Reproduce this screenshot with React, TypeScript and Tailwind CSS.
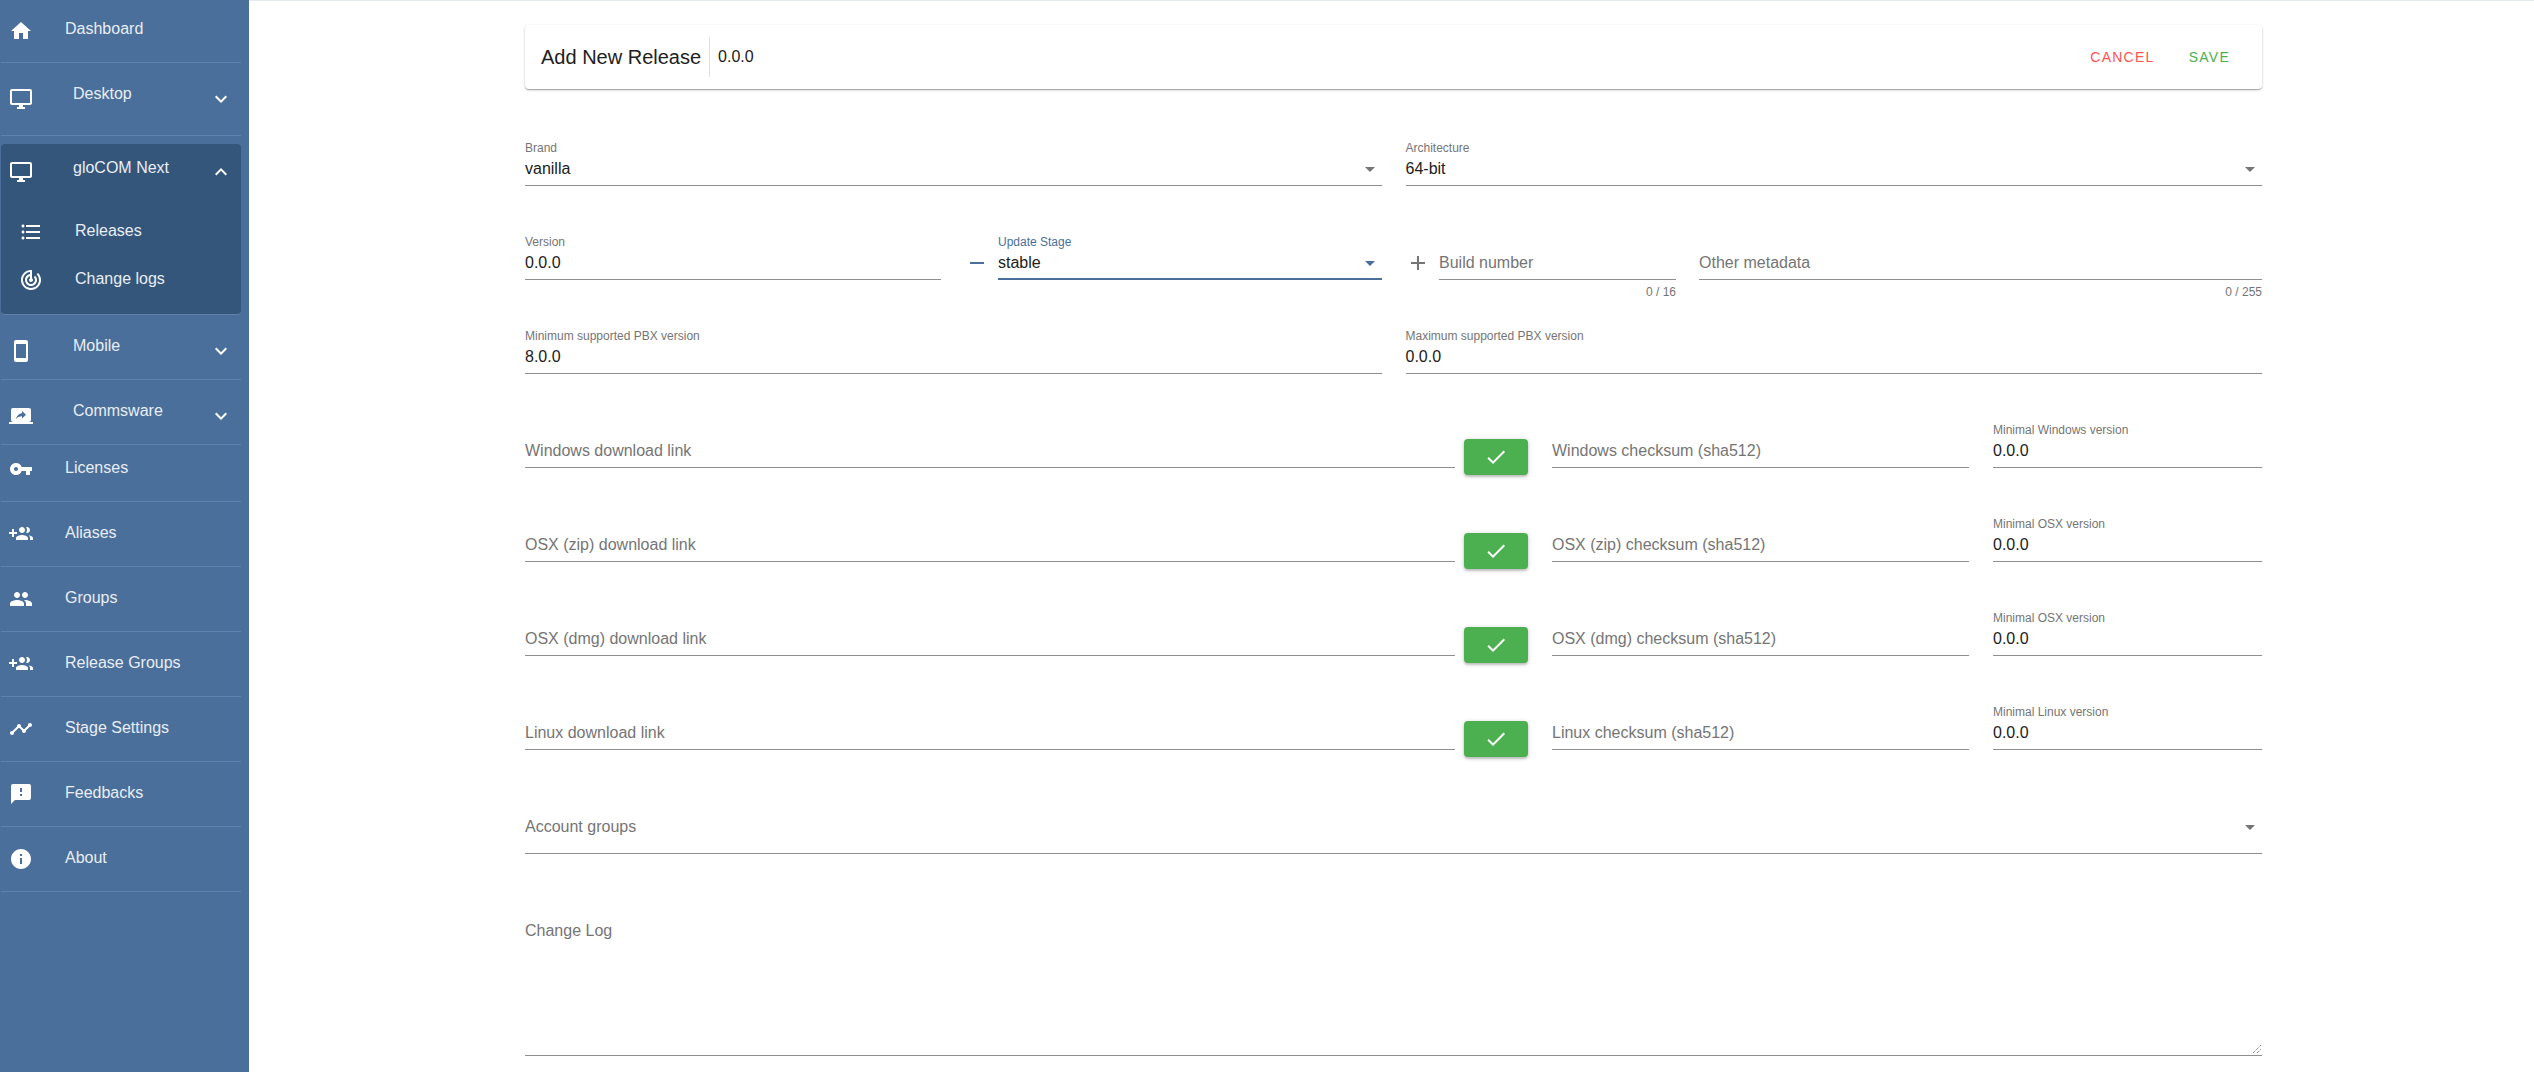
import type { ReactNode } from "react";
import {
  MdAdd,
  MdArrowDropDown,
  MdCheck,
  MdExpandLess,
  MdExpandMore,
  MdFeedback,
  MdFormatListBulleted,
  MdHome,
  MdInfo,
  MdOutlineDesktopWindows,
  MdRemove,
  MdScreenShare,
  MdStayCurrentPortrait,
  MdTimeline,
  MdTrackChanges,
  MdVpnKey,
} from "react-icons/md";
import type { IconType } from "react-icons";

// the older material glyphs, react-icons ships a redrawn version of these
const GroupAddIcon: IconType = ({ className }) => (
  <svg className={className} viewBox="0 0 24 24" fill="currentColor">
    <path d="M8 10H5V7H3v3H0v2h3v3h2v-3h3v-2zm10 1c1.66 0 2.99-1.34 2.99-3S19.66 5 18 5c-.32 0-.63.05-.91.14.57.81.9 1.79.9 2.86s-.34 2.04-.9 2.86c.28.09.59.14.91.14zm-5 0c1.66 0 2.99-1.34 2.99-3S14.66 5 13 5s-3 1.34-3 3 1.34 3 3 3zm6.62 2.16c.83.73 1.38 1.66 1.38 2.84v2h3v-2c0-1.54-2.37-2.49-4.38-2.84zM13 13c-2 0-6 1-6 3v2h12v-2c0-2-4-3-6-3z" />
  </svg>
);

const GroupIcon: IconType = ({ className }) => (
  <svg className={className} viewBox="0 0 24 24" fill="currentColor">
    <path d="M16 11c1.66 0 2.99-1.34 2.99-3S17.66 5 16 5c-1.66 0-3 1.34-3 3s1.34 3 3 3zm-8 0c1.66 0 2.99-1.34 2.99-3S9.66 5 8 5C6.34 5 5 6.34 5 8s1.34 3 3 3zm0 2c-2.33 0-7 1.17-7 3.5V19h14v-2.5c0-2.33-4.67-3.5-7-3.5zm8 0c-.29 0-.62.02-.97.05 1.16.84 1.97 1.97 1.97 3.45V19h6v-2.5c0-2.33-4.67-3.5-7-3.5z" />
  </svg>
);

type NavItem = {
  label: string;
  icon: IconType;
  height: string;
  iconTop: string;
  textTop: string;
  chevronTop?: string;
};

const NavRow = ({ item }: { item: NavItem }) => {
  const Icon = item.icon;
  const isGroup = !!item.chevronTop;
  return (
    <div className={`flex items-start border-b border-[#5f82ab] pl-2 ${item.height}`}>
      <Icon className={`size-6 shrink-0 text-white ${item.iconTop}`} />
      <span className={`text-[16px] leading-6 text-[#e9eef4] ${isGroup ? "ml-10" : "ml-8"} ${item.textTop}`}>
        {item.label}
      </span>
      {item.chevronTop && (
        <MdExpandMore className={`ml-auto mr-2 size-6 shrink-0 text-white ${item.chevronTop}`} />
      )}
    </div>
  );
};

const SubRow = ({ icon: Icon, label }: { icon: IconType; label: string }) => (
  <div className="flex h-12 items-center pl-[18px]">
    <Icon className="size-6 shrink-0 text-white" />
    <span className="mb-[3px] ml-8 text-[16px] leading-6 text-[#e9eef4]">{label}</span>
  </div>
);

const Sidebar = () => (
  <aside className="h-full w-[249px] shrink-0 bg-[#4a6f9b] pl-px pr-2">
    <NavRow item={{ label: "Dashboard", icon: MdHome, height: "h-[63px]", iconTop: "mt-[19px]", textTop: "mt-[17px]" }} />
    <NavRow
      item={{
        label: "Desktop",
        icon: MdOutlineDesktopWindows,
        height: "h-[73px]",
        iconTop: "mt-6",
        textTop: "mt-[19px]",
        chevronTop: "mt-6",
      }}
    />
    <div className="mt-2 h-[171px] rounded border-b border-[#5f82ab] bg-[#34567b]">
      <div className="flex h-16 items-start pl-2">
        <MdOutlineDesktopWindows className="mt-4 size-6 shrink-0 text-white" />
        <span className="ml-10 mt-3 text-[16px] leading-6 text-[#e9eef4]">gloCOM Next</span>
        <MdExpandLess className="ml-auto mr-2 mt-4 size-6 shrink-0 text-white" />
      </div>
      <SubRow icon={MdFormatListBulleted} label="Releases" />
      <SubRow icon={MdTrackChanges} label="Change logs" />
    </div>
    <NavRow
      item={{
        label: "Mobile",
        icon: MdStayCurrentPortrait,
        height: "h-[65px]",
        iconTop: "mt-6",
        textTop: "mt-[19px]",
        chevronTop: "mt-6",
      }}
    />
    <NavRow
      item={{
        label: "Commsware",
        icon: MdScreenShare,
        height: "h-[65px]",
        iconTop: "mt-6",
        textTop: "mt-[19px]",
        chevronTop: "mt-6",
      }}
    />
    <NavRow item={{ label: "Licenses", icon: MdVpnKey, height: "h-[57px]", iconTop: "mt-3", textTop: "mt-[11px]" }} />
    <NavRow item={{ label: "Aliases", icon: GroupAddIcon, height: "h-[65px]", iconTop: "mt-5", textTop: "mt-[19px]" }} />
    <NavRow item={{ label: "Groups", icon: GroupIcon, height: "h-[65px]", iconTop: "mt-5", textTop: "mt-[19px]" }} />
    <NavRow item={{ label: "Release Groups", icon: GroupAddIcon, height: "h-[65px]", iconTop: "mt-5", textTop: "mt-[19px]" }} />
    <NavRow item={{ label: "Stage Settings", icon: MdTimeline, height: "h-[65px]", iconTop: "mt-5", textTop: "mt-[19px]" }} />
    <NavRow item={{ label: "Feedbacks", icon: MdFeedback, height: "h-[65px]", iconTop: "mt-5", textTop: "mt-[19px]" }} />
    <NavRow item={{ label: "About", icon: MdInfo, height: "h-[65px]", iconTop: "mt-5", textTop: "mt-[19px]" }} />
  </aside>
);

// label + value + underline, the value sits on the same line as an empty field's hint
const Field = ({
  label,
  value,
  select,
  focused,
  className = "",
  helper,
}: {
  label: string;
  value?: string;
  select?: boolean;
  focused?: boolean;
  className?: string;
  helper?: string;
}) => (
  <div className={className}>
    <div className={`h-[14px] text-[12px] leading-[14px] ${focused ? "text-[#4a6f9b]" : "text-[#757575]"}`}>
      {value ? label : ""}
    </div>
    <div
      className={`flex h-[31px] items-start pt-[2px] ${
        focused ? "border-b-2 border-[#4a6f9b]" : "border-b border-[#8f8f8f]"
      }`}
    >
      <span className={`text-[16px] leading-6 ${value ? "text-[#212121]" : "text-[#757575]"}`}>{value || label}</span>
      {select && (
        <MdArrowDropDown className={`ml-auto size-6 shrink-0 ${focused ? "text-[#4a6f9b]" : "text-[#757575]"}`} />
      )}
    </div>
    {helper && <div className="mt-[5px] text-right text-[12px] leading-[14px] text-[#757575]">{helper}</div>}
  </div>
);

const CheckButton = () => (
  <button className="mt-4 flex h-9 w-16 shrink-0 items-center justify-center rounded bg-[#4caf50] shadow-[0_1px_5px_0_rgba(0,0,0,0.2),0_2px_2px_0_rgba(0,0,0,0.14)]">
    <MdCheck className="size-6 text-white" />
  </button>
);

const Row = ({ children, className = "" }: { children: ReactNode; className?: string }) => (
  <div className={`h-[94px] ${className}`}>{children}</div>
);

const downloads = [
  { os: "Windows", link: "Windows download link", sum: "Windows checksum (sha512)", min: "Minimal Windows version" },
  { os: "zip", link: "OSX (zip) download link", sum: "OSX (zip) checksum (sha512)", min: "Minimal OSX version" },
  { os: "dmg", link: "OSX (dmg) download link", sum: "OSX (dmg) checksum (sha512)", min: "Minimal OSX version" },
  { os: "Linux", link: "Linux download link", sum: "Linux checksum (sha512)", min: "Minimal Linux version" },
];

const App = () => (
  <div className="flex h-screen overflow-hidden bg-white font-['Liberation_Sans',Arial,sans-serif]">
    <Sidebar />
    <main className="flex-1 border-t border-[#e4eaf3] pl-[276px]">
      <div className="w-[1737px]">
        <div className="mt-6 flex h-16 items-center rounded-sm bg-white pl-4 pr-8 shadow-[0_1px_3px_0_rgba(0,0,0,0.2),0_1px_1px_0_rgba(0,0,0,0.14),0_2px_1px_-1px_rgba(0,0,0,0.12)]">
          <h1 className="text-[20px] font-normal leading-7 text-[#212121]">Add New Release</h1>
          <div className="ml-2 h-10 w-px bg-[#e0e0e0]" />
          <span className="ml-2 text-[16px] text-[#212121]">0.0.0</span>
          <span className="ml-auto text-[14px] uppercase tracking-[0.09em] text-[#ff5252]">Cancel</span>
          <span className="ml-[34px] text-[14px] uppercase tracking-[0.09em] text-[#4caf50]">Save</span>
        </div>

        <div className="mt-[52px]">
          <Row className="grid grid-cols-2 gap-x-6">
            <Field label="Brand" value="vanilla" select />
            <Field label="Architecture" value="64-bit" select />
          </Row>
          <Row className="flex">
            <Field label="Version" value="0.0.0" className="w-[416px]" />
            <MdRemove className="ml-6 mt-4 size-6 shrink-0 text-[#4a6f9b]" />
            <Field label="Update Stage" value="stable" select focused className="ml-[9px] w-[384px]" />
            <MdAdd className="ml-6 mt-4 size-6 shrink-0 text-[#757575]" />
            <Field label="Build number" helper="0 / 16" className="ml-[9px] w-[237px]" />
            <Field label="Other metadata" helper="0 / 255" className="ml-[23px] w-[563px]" />
          </Row>
          <Row className="grid grid-cols-2 gap-x-6">
            <Field label="Minimum supported PBX version" value="8.0.0" />
            <Field label="Maximum supported PBX version" value="0.0.0" />
          </Row>
          {downloads.map((d) => (
            <Row key={d.os} className="flex">
              <Field label={d.link} className="w-[930px]" />
              <div className="ml-[9px]">
                <CheckButton />
              </div>
              <Field label={d.sum} className="ml-6 w-[417px]" />
              <Field label={d.min} value="0.0.0" className="ml-6 w-[269px]" />
            </Row>
          ))}

          <div className="flex h-[55px] items-start justify-between border-b border-[#8f8f8f] pt-4">
            <span className="text-[16px] leading-6 text-[#757575]">Account groups</span>
            <MdArrowDropDown className="size-6 shrink-0 text-[#757575]" />
          </div>

          <div className="relative mt-[47px] h-[155px] border-b border-[#8f8f8f] pt-[18px]">
            <span className="text-[16px] leading-6 text-[#757575]">Change Log</span>
            <svg className="absolute bottom-[2px] right-[1px] size-2" viewBox="0 0 8 8">
              <path d="M0 8L8 0M4 8L8 4" stroke="#555" strokeWidth="1" strokeDasharray="1 1" />
            </svg>
          </div>
        </div>
      </div>
    </main>
  </div>
);

export default App;
